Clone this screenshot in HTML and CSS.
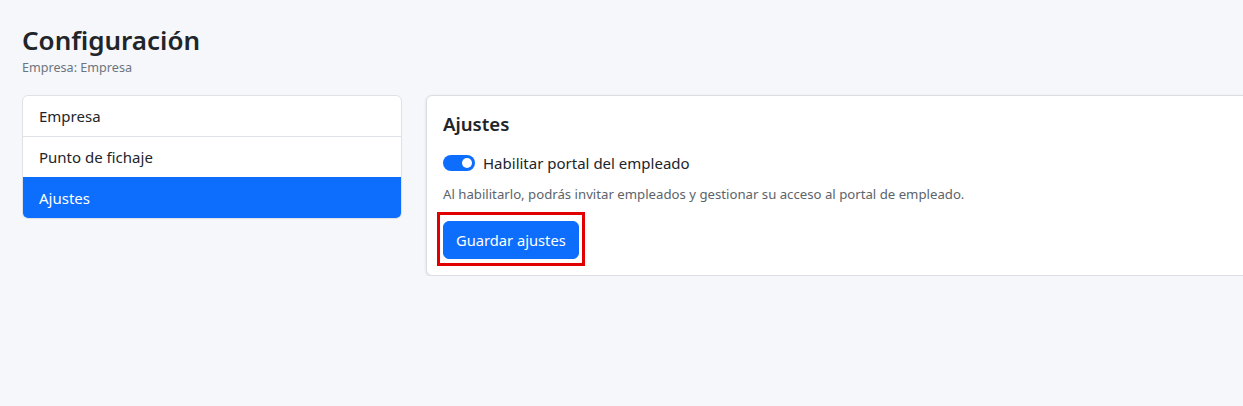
FILE: index.html
```html
<!DOCTYPE html>
<html lang="es">
<head>
<meta charset="utf-8">
<title>Configuración</title>
<link rel="stylesheet" href="styles.css">
</head>
<body>
<main class="page">
  <header class="page-header">
    <h1 class="page-title">Configuración</h1>
    <p class="page-subtitle">Empresa: Empresa</p>
  </header>
  <div class="layout">
    <nav class="list-group">
      <a class="list-item">Empresa</a>
      <a class="list-item">Punto de fichaje</a>
      <a class="list-item active">Ajustes</a>
    </nav>
    <section class="card">
      <h2 class="card-title">Ajustes</h2>
      <label class="form-switch">
        <span class="switch"><span class="knob"></span></span>
        <span class="switch-label">Habilitar portal del empleado</span>
      </label>
      <p class="help">Al habilitarlo, podrás invitar empleados y gestionar su acceso al portal de empleado.</p>
      <div class="actions">
        <button class="btn-primary" type="button">Guardar ajustes</button>
        <span class="highlight"></span>
      </div>
    </section>
  </div>
</main>
</body>
</html>
```

FILE: styles.css
```css
html, body {
  margin: 0;
  padding: 0;
  overflow: hidden;
}
body {
  background: #f6f7fb;
  color: #212529;
  font-family: "Noto Sans", "Open Sans", sans-serif;
  font-size: 15px;
  line-height: 1.5;
}
.page {
  padding: 21px 0 0 22px;
}
.page-header {
  margin-bottom: 18px;
}
.page-title {
  margin: 0;
  font-size: 26px;
  font-weight: 600;
  line-height: 38px;
}
.page-subtitle {
  margin: 0;
  font-size: 12.6px;
  line-height: 18px;
  color: #6c757d;
}
.layout {
  display: grid;
  grid-template-columns: 380px 900px;
  gap: 24px;
  align-items: start;
}
.list-group {
  display: flex;
  flex-direction: column;
  background: #fff;
  border: 1px solid #dee2e6;
  border-radius: 6px;
  overflow: hidden;
}
.list-item {
  display: block;
  padding: 8px 16px;
  line-height: 24px;
  color: #212529;
  border-top: 1px solid #dee2e6;
}
.list-item:first-child {
  border-top: 0;
}
.list-item.active {
  background: #0d6efd;
  color: #fff;
  border-top-color: #0d6efd;
}
.card {
  background: #fff;
  border: 1px solid #dadde2;
  border-radius: 6px;
  box-shadow: 0 1px 3px rgba(0, 0, 0, 0.12);
  padding: 16px;
}
.card-title {
  margin: 0 0 15px;
  font-size: 18.6px;
  font-weight: 600;
  line-height: 24px;
}
.form-switch {
  display: flex;
  align-items: center;
  gap: 8px;
  height: 24px;
  margin-bottom: 9px;
}
.switch {
  display: flex;
  align-items: center;
  justify-content: flex-end;
  width: 32px;
  height: 16px;
  box-sizing: border-box;
  padding: 0 3px;
  border-radius: 8px;
  background: #0d6efd;
}
.knob {
  width: 10px;
  height: 10px;
  border-radius: 50%;
  background: #fff;
}
.switch-label {
  font-size: 15px;
}
.help {
  margin: 0 0 17px;
  font-size: 13.2px;
  line-height: 20px;
  color: #5c636a;
}
.actions {
  position: relative;
  display: inline-block;
}
.btn-primary {
  display: block;
  padding: 6px 12px;
  font-family: inherit;
  font-size: 14.7px;
  line-height: 24px;
  color: #fff;
  background: #0d6efd;
  border: 1px solid #0d6efd;
  border-radius: 6px;
}
.highlight {
  position: absolute;
  left: -6px;
  top: -9px;
  width: 142px;
  height: 48px;
  border: 3px solid #e00000;
}
```
